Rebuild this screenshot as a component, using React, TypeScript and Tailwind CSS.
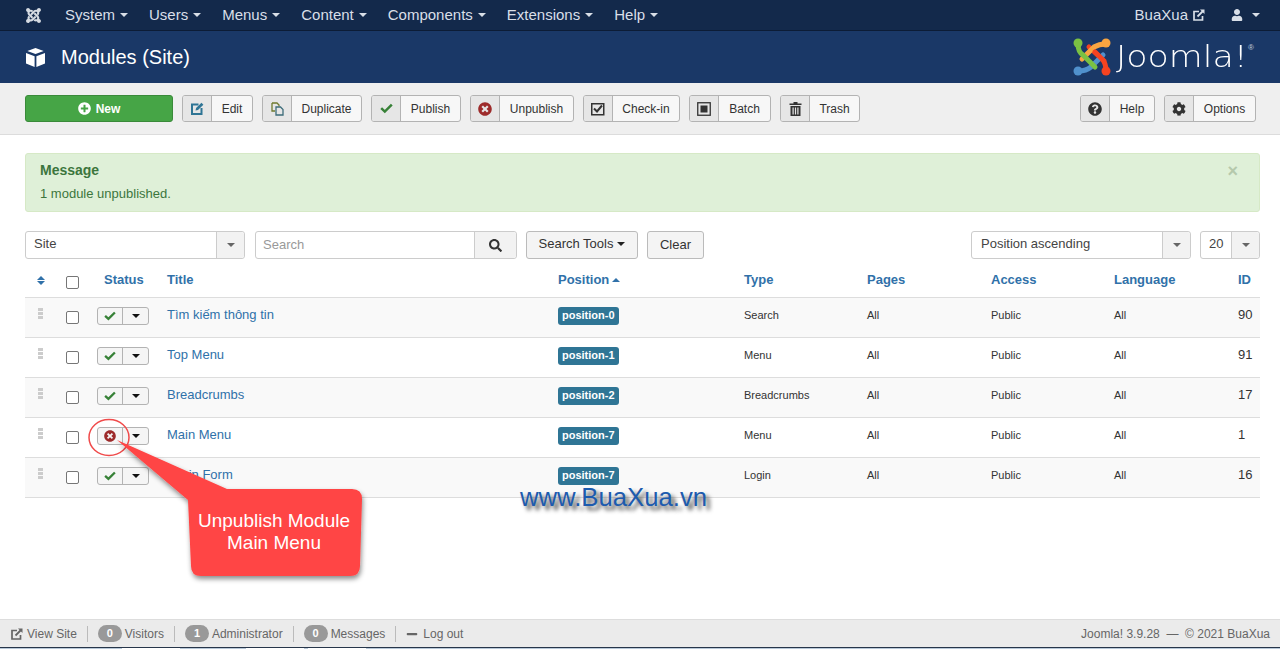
import React from "react";
import { FaCog, FaMinus, FaPlusCircle, FaQuestionCircle, FaSearch, FaTimesCircle, FaUser, FaJoomla } from "react-icons/fa";

const Caret = ({ c = "" }: { c?: string }) => (
  <span className={`inline-block w-0 h-0 border-x-[4px] border-x-transparent border-t-[4px] ${c}`} />
);

const menus = ["System", "Users", "Menus", "Content", "Components", "Extensions", "Help"];

const CheckMark = ({ w = 13 }: { w?: number }) => (
  <svg width={w} height={w * 0.8} viewBox="0 0 13 10.400"><path d="M1.200 5.200l3.600 3.400 7-7" fill="none" stroke="#378137" strokeWidth="2.500" /></svg>
);
const CheckIn = () => (
  <svg width="14" height="14" viewBox="0 0 14 14"><rect x="0.750" y="1.750" width="12" height="11" fill="none" stroke="#333" strokeWidth="1.500" /><path d="M3 6.500l3 3 5-6" fill="none" stroke="#333" strokeWidth="2" /></svg>
);
const Batch = () => (
  <svg width="14" height="14" viewBox="0 0 14 14"><rect x="0.750" y="0.750" width="12.500" height="12.500" fill="none" stroke="#333" strokeWidth="1.300" /><rect x="3.500" y="3.500" width="7" height="7" fill="#333" /></svg>
);
const EditIcon = () => (
  <svg width="13" height="13" viewBox="0 0 13 13" fill="none"><path d="M7.500 2.500H1v9.500h9.500V6" stroke="#2f7595" strokeWidth="2" /><path d="M4.500 8.500l.6-2.400L10.500.8l1.900 1.900-5.400 5.300z" fill="#2f7595" /></svg>
);
const DupIcon = () => (
  <svg width="13" height="14" viewBox="0 0 13 14" fill="none"><path d="M1 1h5l2 2v1.500M1 1v8h3" stroke="#6f7a2e" strokeWidth="1.300" /><path d="M5 5h4.500l2.500 2.500V13H5z" stroke="#3d6c7a" strokeWidth="1.300" /></svg>
);
const TrashIcon = () => (
  <svg width="13" height="14" viewBox="0 0 13 14" fill="#333"><path d="M4.500 0h4v1.500h4V3H.500V1.500h4zM1.500 4h10v10h-10zM3.500 5.500v7h1.200v-7zM5.900 5.500v7h1.200v-7zM8.300 5.500v7h1.200v-7z" fillRule="evenodd" /></svg>
);
const LinkIcon = ({ s = 10, c = "currentColor" }: { s?: number; c?: string }) => (
  <svg width={s} height={s} viewBox="0 0 12 12" fill="none"><path d="M6 2.500H1v8.500h8.500V7" stroke={c} strokeWidth="1.700" /><path d="M4.500 7.500L10 2" stroke={c} strokeWidth="1.800" /><path d="M7 0.500h4.500V5z" fill={c} /></svg>
);

function ToolBtn({ icon, label, textW }: { icon: React.ReactNode; label: string; textW: number }) {
  return (
    <div className="flex h-[27px] rounded-[3px] border border-[#b3b3b3] bg-[#f7f7f7] text-[12px] text-[#333] overflow-hidden">
      <span className="flex items-center justify-center w-[29px] bg-[#e6e6e6] border-r border-[#b3b3b3]">{icon}</span>
      <span className="flex items-center justify-center" style={{ width: textW }}>{label}</span>
    </div>
  );
}

const rows = [
  { t: "Tìm kiếm thông tin", p: "position-0", ty: "Search", id: 90, on: true },
  { t: "Top Menu", p: "position-1", ty: "Menu", id: 91, on: true },
  { t: "Breadcrumbs", p: "position-2", ty: "Breadcrumbs", id: 17, on: true },
  { t: "Main Menu", p: "position-7", ty: "Menu", id: 1, on: false },
  { t: "Login Form", p: "position-7", ty: "Login", id: 16, on: true },
];

const grid = "grid grid-cols-[41px_31px_70px_391px_186px_123px_124px_123px_124px_22px]";

const Drag = () => (
  <span className="flex flex-col gap-[1px] w-[5px]">
    <i className="block h-[3px] bg-[#ccc]" /><i className="block h-[3px] bg-[#ccc]" /><i className="block h-[3px] bg-[#ccc]" />
  </span>
);
const Check = () => <span className="block w-[13px] h-[13px] rounded-[2px] border border-[#767676] bg-white" />;

const Badge = ({ n }: { n: number }) => (
  <span className="inline-flex items-center justify-center w-[24px] h-[17px] rounded-full bg-[#999] text-white text-[11px] font-bold">{n}</span>
);
const Sep = ({ c = "mx-[10px]" }: { c?: string }) => <span className={`w-px h-[16px] bg-[#bbb] ${c}`} />;

export default function App() {
  return (
    <div className="relative w-[1280px] h-[649px] overflow-hidden bg-white font-['Liberation_Sans',Arial,sans-serif] text-[#333]">
      <nav className="flex items-center h-[31px] bg-[#13294b] border-b border-[#0c1c36] text-[#d9dfe8] text-[15px]">
        <FaJoomla className="ml-[25px] mr-[23px] text-[17px] text-[#d6dbe2]" />
        <div className="flex gap-[21px]">
          {menus.map((m) => (
            <span key={m} className="flex items-center gap-[5px]">{m}<Caret c="border-t-[#d9dfe8]" /></span>
          ))}
        </div>
        <span className="ml-auto flex items-center gap-[5px]">BuaXua<LinkIcon s={12} /></span>
        <span className="ml-[26px] mr-[20px] flex items-center gap-[9px]"><FaUser className="text-[12px]" /><Caret c="border-t-[#d9dfe8]" /></span>
      </nav>

      <header className="flex items-center h-[52px] bg-[#1a3867] text-white pl-[25px] pr-[25px]">
        <svg width="21" height="21" viewBox="0 0 21 21" fill="white"><path d="M10.500 1l8.200 3.100-8.200 3-8.200-3zM1 6l8.600 3.200V20L1 16.600zM20 6l-8.600 3.200V20L20 16.600z" /></svg>
        <h1 className="ml-[15px] text-[20px] leading-none">Modules (Site)</h1>
        <div className="ml-auto flex items-center">
          <svg width="38" height="38" viewBox="0 0 38 38" fill="none" strokeWidth="5" strokeLinecap="round">
            <path d="M33 33Q33 25 29 21L16 9" stroke="#f44321" />
            <path d="M6 33Q13 33 18 29L30 17" stroke="#5091cd" />
            <path d="M33 6Q26 6 21 9L9 21" stroke="#f9a541" />
            <path d="M5 6Q5 14 10 17L22 29" stroke="#7ac143" />
            <path d="M22 14L31 23" stroke="#f44321" />
            <circle cx="5" cy="5" r="4.500" fill="#7ac143" stroke="none" />
            <circle cx="33" cy="5" r="4.500" fill="#f9a541" stroke="none" />
            <circle cx="33" cy="33" r="4.500" fill="#f44321" stroke="none" />
            <circle cx="5" cy="33" r="4.500" fill="#5091cd" stroke="none" />
          </svg>
          <span className="ml-[5px] w-[132px] whitespace-nowrap origin-left scale-x-[1.16] font-['DejaVu_Sans',sans-serif] font-extralight text-[30px] leading-none">Joomla!</span>
          <span className="w-[7px] self-start mt-[6px] text-[8px] leading-none text-[#c9d2de]">®</span>
        </div>
      </header>

      <div className="flex items-center gap-[9px] h-[52px] bg-[#efefef] border-b border-[#dcdcdc] pl-[25px] pr-[24px]">
        <button className="flex items-center justify-center gap-[5px] w-[148px] h-[27px] rounded-[3px] bg-[#46a546] border border-[#3a8a3a] text-white text-[12px] font-bold">
          <FaPlusCircle className="text-[13px]" />New
        </button>
        <ToolBtn icon={<EditIcon />} label="Edit" textW={40} />
        <ToolBtn icon={<DupIcon />} label="Duplicate" textW={69} />
        <ToolBtn icon={<CheckMark />} label="Publish" textW={59} />
        <ToolBtn icon={<FaTimesCircle className="text-[14px] text-[#9d2b2b]" />} label="Unpublish" textW={73} />
        <ToolBtn icon={<CheckIn />} label="Check-in" textW={66} />
        <ToolBtn icon={<Batch />} label="Batch" textW={51} />
        <ToolBtn icon={<TrashIcon />} label="Trash" textW={49} />
        <div className="ml-auto flex gap-[9px]">
          <ToolBtn icon={<FaQuestionCircle className="text-[14px] text-[#333]" />} label="Help" textW={44} />
          <ToolBtn icon={<FaCog className="text-[14px] text-[#333]" />} label="Options" textW={61} />
        </div>
      </div>

      <main className="pl-[25px] pr-[20px] pt-[18px]">
        <div className="relative h-[59px] rounded-[3px] border border-[#d6e9c6] bg-[#dff0d8] text-[#3c763d] pl-[14px] pt-[7px]">
          <div className="text-[14px] font-bold leading-[18px]">Message</div>
          <div className="text-[13px] leading-[18px] mt-[6px]">1 module unpublished.</div>
          <span className="absolute right-[21px] top-[7px] text-[#b5c9ac] text-[18px] font-bold leading-[20px]">×</span>
        </div>

        <div className="flex items-center h-[28px] mt-[19px] text-[13px]">
          <div className="flex w-[220px] h-[28px] rounded-[3px] border border-[#ccc] bg-white">
            <span className="flex-1 pl-[8px] pb-[2px] flex items-center text-[#444]">Site</span>
            <span className="w-[28px] flex items-center justify-center bg-[#f2f2f2] border-l border-[#ccc] rounded-r-[3px]"><Caret c="border-t-[#666]" /></span>
          </div>
          <div className="flex ml-[10px] w-[262px] h-[28px] rounded-[3px] border border-[#ccc] bg-white">
            <span className="flex-1 pl-[7px] flex items-center text-[#999]">Search</span>
            <span className="w-[42px] flex items-center justify-center bg-[#f2f2f2] border-l border-[#ccc] rounded-r-[3px]"><FaSearch className="text-[13px] text-[#333]" /></span>
          </div>
          <button className="ml-[9px] pb-[2px] flex items-center justify-center gap-[4px] w-[112px] h-[28px] rounded-[3px] border border-[#bbb] bg-[#f4f4f4] text-[#333]">Search Tools<Caret c="border-t-[#222]" /></button>
          <button className="ml-[9px] w-[57px] h-[28px] rounded-[3px] border border-[#bbb] bg-[#f4f4f4] text-[#333]">Clear</button>
          <div className="ml-auto flex w-[220px] h-[28px] rounded-[3px] border border-[#ccc] bg-white">
            <span className="flex-1 pl-[9px] pb-[2px] flex items-center text-[#444]">Position ascending</span>
            <span className="w-[28px] flex items-center justify-center bg-[#f2f2f2] border-l border-[#ccc] rounded-r-[3px]"><Caret c="border-t-[#666]" /></span>
          </div>
          <div className="ml-[9px] flex w-[60px] h-[28px] rounded-[3px] border border-[#ccc] bg-white">
            <span className="flex-1 pl-[8px] pb-[2px] flex items-center text-[#444]">20</span>
            <span className="w-[28px] flex items-center justify-center bg-[#f2f2f2] border-l border-[#ccc] rounded-r-[3px]"><Caret c="border-t-[#666]" /></span>
          </div>
        </div>

        <div className={`${grid} h-[32px] mt-[6px] items-center pb-[2px] text-[13px] font-bold text-[#3071a9]`}>
          <span className="pl-[12px] flex flex-col gap-[1px] items-start">
            <span className="w-0 h-0 border-x-[4px] border-x-transparent border-b-[4px] border-b-[#3071a9]" />
            <span className="w-0 h-0 border-x-[4px] border-x-transparent border-t-[4px] border-t-[#3071a9]" />
          </span>
          <span className="pt-[4px]"><Check /></span>
          <span className="pl-[7px]">Status</span>
          <span>Title</span>
          <span className="flex items-center gap-[3px]">Position<span className="w-0 h-0 border-x-[4px] border-x-transparent border-b-[4px] border-b-[#3071a9]" /></span>
          <span>Type</span><span>Pages</span><span>Access</span><span>Language</span><span>ID</span>
        </div>

        <div className="border-t border-[#ddd]">
          {rows.map((r, i) => (
            <div key={r.t} className={`${grid} h-[40px] border-b border-[#ddd] ${i % 2 === 0 ? "bg-[#f9f9f9]" : "bg-white"} text-[11px]`}>
              <span className="pl-[13px] pt-[10px]"><Drag /></span>
              <span className="pt-[13px]"><Check /></span>
              <span className="pt-[9px]">
                <span className="flex w-[52px] h-[18px] rounded-[3px] border border-[#b3b3b3] bg-[#f5f5f5]">
                  <span className="flex-1 flex items-center justify-center border-r border-[#b3b3b3]">
                    {r.on ? <CheckMark w={12} /> : <FaTimesCircle className="text-[12px] text-[#9d2b2b]" />}
                  </span>
                  <span className="w-[25px] flex items-center justify-center"><Caret c="border-t-[#111]" /></span>
                </span>
              </span>
              <span className="pt-[9px] text-[13px] leading-[15px] text-[#3071a9]">{r.t}</span>
              <span className="pt-[9px]"><span className="inline-block h-[18px] px-[4px] rounded-[3px] bg-[#2f7595] text-white text-[11px] font-bold leading-[16px]">{r.p}</span></span>
              <span className="pt-[11px] leading-[13px]">{r.ty}</span>
              <span className="pt-[11px] leading-[13px]">All</span>
              <span className="pt-[11px] leading-[13px]">Public</span>
              <span className="pt-[11px] leading-[13px]">All</span>
              <span className="pt-[9px] text-[13px] leading-[15px]">{r.id}</span>
            </div>
          ))}
        </div>
      </main>

      <div className="absolute left-0 right-0 bottom-0">
        <footer className="h-[28px] bg-[#ebebeb] border-t border-[#ddd] flex items-center pl-[11px] pr-[10px] text-[12px] text-[#666]">
          <span className="mr-[4px]"><LinkIcon s={12} /></span>View Site<Sep c="ml-[10px] mr-[10px]" />
          <Badge n={0} /><span className="ml-[3px]">Visitors</span><Sep />
          <Badge n={1} /><span className="ml-[3px]">Administrator</span><Sep />
          <Badge n={0} /><span className="ml-[3px]">Messages</span><Sep />
          <FaMinus className="text-[12px] mr-[5px]" />Log out
          <span className="ml-auto">Joomla! 3.9.28 &nbsp;—&nbsp; © 2021 BuaXua</span>
        </footer>
        <div className="h-[1px] bg-[#27364a]" />
        <div className="flex h-[1px] bg-[#b8c8d8]">
          <span className="ml-[122px] w-[58px] bg-white" />
          <span className="ml-[66px] w-[58px] bg-white" />
          <span className="ml-[4px] w-[58px] bg-white" />
        </div>
      </div>

      <svg className="absolute left-0 top-0 pointer-events-none" width="1280" height="649" viewBox="0 0 1280 649" fill="none">
        <defs>
          <filter id="sh" x="-20%" y="-20%" width="140%" height="140%"><feDropShadow dx="1" dy="3" stdDeviation="2.500" floodColor="#000" floodOpacity="0.45" /></filter>
        </defs>
        <ellipse cx="109" cy="437.500" rx="20" ry="18" stroke="#f04a4a" strokeWidth="1.500" />
        <path filter="url(#sh)" fill="#ff4444" d="M117 440L227 489H352Q362 489 362 499L360 566Q360 576 350 576H201Q191 576 191 566L188 500Z" />
      </svg>
      <div className="absolute left-[190px] top-[510px] w-[168px] text-center text-white text-[19px] leading-[22px]">Unpublish Module<br />Main Menu</div>
      <div className="absolute left-[520px] top-[482px] text-[#1d5bae] text-[25.700px] leading-[30px] [text-shadow:4px_4px_4px_#444]">www.BuaXua.vn</div>
    </div>
  );
}
